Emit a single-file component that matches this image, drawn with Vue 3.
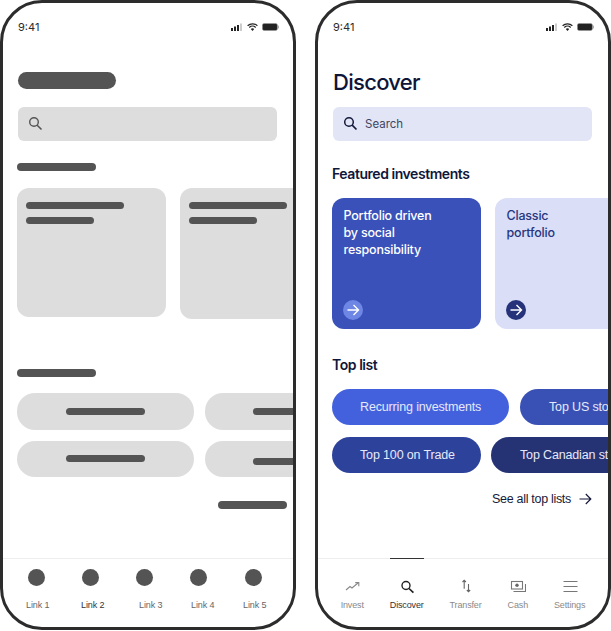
<script setup>
const leftLabels = ['Link 1', 'Link 2', 'Link 3', 'Link 4', 'Link 5']
const rightNav = [
  { label: 'Invest', icon: 'invest' },
  { label: 'Discover', icon: 'discover', active: true },
  { label: 'Transfer', icon: 'transfer' },
  { label: 'Cash', icon: 'cash' },
  { label: 'Settings', icon: 'settings' },
]
</script>

<template>
  <main class="page">
    <!-- Wireframe phone -->
    <section class="phone">
      <header class="status">
        <span class="time">9:41</span>
        <span class="status-icons">
          <svg width="12" height="8" viewBox="0 0 12 8"><rect x="0" y="5" width="2" height="3" fill="#222"/><rect x="3" y="3.5" width="2" height="4.5" fill="#222"/><rect x="6" y="2" width="2" height="6" fill="#222"/><rect x="9" y="0.5" width="2" height="7.5" fill="#ccc"/></svg>
          <svg width="11" height="8" viewBox="0 0 11 8"><path d="M.6 2.8a7 7 0 0 1 9.8 0M2.3 4.5a4.6 4.6 0 0 1 6.4 0" fill="none" stroke="#222" stroke-width="1.2"/><path d="M5.5 8 3.8 6.1a2.4 2.4 0 0 1 3.4 0z" fill="#222"/></svg>
          <svg width="17" height="8" viewBox="0 0 17 8"><rect x=".4" y=".4" width="15" height="7.2" rx="1.8" fill="#222" stroke="#999" stroke-width=".6"/><rect x="15.8" y="2.6" width="1" height="2.8" rx=".5" fill="#999"/></svg>
        </span>
      </header>
      <div class="wf-content">
        <div class="title-row"><div class="bar wf-title"></div></div>
        <div class="search wf-search">
          <svg class="search-icon" width="15" height="15" viewBox="0 0 15 15"><circle cx="6" cy="6" r="4.3" fill="none" stroke="#555" stroke-width="1.4"/><path d="m9.2 9.2 4.3 4.3" stroke="#555" stroke-width="1.6"/></svg>
        </div>
        <div class="bar wf-heading"></div>
        <div class="row wf-cards">
          <div class="wf-card">
            <div class="bar b-long"></div>
            <div class="bar b-short"></div>
          </div>
          <div class="wf-card tall">
            <div class="bar b-long"></div>
            <div class="bar b-short"></div>
          </div>
        </div>
        <div class="bar wf-heading second"></div>
        <div class="row wf-pills">
          <div class="wf-pill"><div class="bar b-pill"></div></div>
          <div class="wf-pill clipped"><div class="bar b-pill"></div></div>
        </div>
        <div class="row wf-pills next">
          <div class="wf-pill"><div class="bar b-pill"></div></div>
          <div class="wf-pill clipped lowered"><div class="bar b-pill"></div></div>
        </div>
        <div class="bar wf-all"></div>
      </div>
      <nav class="wf-nav">
        <div class="dots"><span v-for="n in 5" :key="n" class="dot"></span></div>
        <div class="links">
          <span v-for="(l, i) in leftLabels" :key="l" class="link" :class="[`l${i + 1}`]">{{ l }}</span>
        </div>
      </nav>
    </section>

    <!-- Final phone -->
    <section class="phone">
      <header class="status">
        <span class="time">9:41</span>
        <span class="status-icons">
          <svg width="12" height="8" viewBox="0 0 12 8"><rect x="0" y="5" width="2" height="3" fill="#222"/><rect x="3" y="3.5" width="2" height="4.5" fill="#222"/><rect x="6" y="2" width="2" height="6" fill="#222"/><rect x="9" y="0.5" width="2" height="7.5" fill="#ccc"/></svg>
          <svg width="11" height="8" viewBox="0 0 11 8"><path d="M.6 2.8a7 7 0 0 1 9.8 0M2.3 4.5a4.6 4.6 0 0 1 6.4 0" fill="none" stroke="#222" stroke-width="1.2"/><path d="M5.5 8 3.8 6.1a2.4 2.4 0 0 1 3.4 0z" fill="#222"/></svg>
          <svg width="17" height="8" viewBox="0 0 17 8"><rect x=".4" y=".4" width="15" height="7.2" rx="1.8" fill="#222" stroke="#999" stroke-width=".6"/><rect x="15.8" y="2.6" width="1" height="2.8" rx=".5" fill="#999"/></svg>
        </span>
      </header>
      <div class="content">
        <h1 class="title">Discover</h1>
        <div class="search real">
          <svg class="search-icon" width="15" height="15" viewBox="0 0 15 15"><circle cx="6" cy="6" r="4.3" fill="none" stroke="#15193a" stroke-width="1.5"/><path d="m9.2 9.2 4.3 4.3" stroke="#15193a" stroke-width="1.7"/></svg>
          <span class="search-text">Search</span>
        </div>
        <h2 class="heading">Featured investments</h2>
        <div class="row cards">
          <article class="card blue">
            <p>Portfolio driven<br>by social<br>responsibility</p>
            <span class="go light">
              <svg width="14" height="14" viewBox="0 0 14 14"><path d="M1.5 7h11M7.5 2l5 5-5 5" fill="none" stroke="#fff" stroke-width="1.4"/></svg>
            </span>
          </article>
          <article class="card pale">
            <p>Classic<br>portfolio</p>
            <span class="go dark">
              <svg width="14" height="14" viewBox="0 0 14 14"><path d="M1.5 7h11M7.5 2l5 5-5 5" fill="none" stroke="#fff" stroke-width="1.4"/></svg>
            </span>
          </article>
        </div>
        <h2 class="heading top">Top list</h2>
        <div class="row pills">
          <div class="pill c1">Recurring investments</div>
          <div class="pill c2">Top US stocks</div>
        </div>
        <div class="row pills second">
          <div class="pill c3">Top 100 on Trade</div>
          <div class="pill c4">Top Canadian stocks</div>
        </div>
        <a class="see-all">
          <span>See all top lists</span>
          <svg width="13" height="12" viewBox="0 0 13 12"><path d="M.5 6h11.2M6.8 1l5 5-5 5" fill="none" stroke="#15193a" stroke-width="1.2"/></svg>
        </a>
      </div>
      <nav class="tabs">
        <div v-for="t in rightNav" :key="t.label" class="tab" :class="{ active: t.active }">
          <svg v-if="t.icon === 'invest'" width="16" height="16" viewBox="0 0 16 16" fill="none" stroke="#888" stroke-width="1.1"><path d="M2 12 6 8.5 8 10l6-5"/><path d="M11.2 4.6h3.6v3.6"/></svg>
          <svg v-else-if="t.icon === 'discover'" width="16" height="16" viewBox="0 0 16 16" fill="none" stroke="#222" stroke-width="1.4"><circle cx="7" cy="7.5" r="4"/><path d="m10 10.5 4.4 4.2" stroke-width="1.7"/></svg>
          <svg v-else-if="t.icon === 'transfer'" width="16" height="16" viewBox="0 0 16 16" fill="none" stroke="#666" stroke-width="1.1"><path d="M6.2 10.7V2.3M4.5 4l1.7-1.7L7.9 4"/><path d="M10.5 6v7.7M8.8 12l1.7 1.7 1.7-1.7"/></svg>
          <svg v-else-if="t.icon === 'cash'" width="16" height="16" viewBox="0 0 16 16" fill="none" stroke="#777" stroke-width="1.1"><rect x="1.5" y="3.5" width="11" height="7.5"/><circle cx="7" cy="7.2" r="1.7" fill="#666" stroke="none"/><path d="M3.5 13.5h12V6"/></svg>
          <svg v-else width="16" height="16" viewBox="0 0 16 16" fill="none" stroke="#777" stroke-width="1.2"><path d="M1.5 3.5h14M1.5 8.5h14M1.5 13.5h14"/></svg>
          <span class="tab-label">{{ t.label }}</span>
        </div>
      </nav>
    </section>
  </main>
</template>

<style scoped>
.page {
  display: flex;
  gap: 19px;
  width: 611px;
  height: 631px;
  background: #fff;
  font-family: Inter, "Liberation Sans", sans-serif;
  overflow: hidden;
}
.phone {
  flex: 0 0 296px;
  box-sizing: border-box;
  height: 630px;
  border: 3px solid #2c2c2c;
  border-radius: 42px;
  display: flex;
  flex-direction: column;
  overflow: hidden;
  background: #fff;
}
.status {
  height: 47.5px;
  flex: none;
  box-sizing: border-box;
  padding: 15.5px 14.5px 0 15px;
  display: flex;
  justify-content: space-between;
  align-items: flex-start;
}
.time {
  font-size: 11px;
  line-height: 16px;
  color: #2b2b2b;
}
.status-icons {
  display: flex;
  align-items: center;
  gap: 4px;
  height: 16px;
}
.row {
  display: flex;
  flex-wrap: nowrap;
}
.bar {
  background: #545454;
  border-radius: 4px;
}
.search {
  box-sizing: border-box;
  height: 34px;
  width: 259px;
  margin: 7px 0 0 1px;
  border-radius: 6px;
  display: flex;
  align-items: center;
  padding-left: 10px;
  gap: 7px;
}
.wf-content,
.content {
  padding-left: 14px;
  flex: 1;
  min-height: 0;
}
.title-row {
  height: 36px;
  margin-top: 13px;
  display: flex;
  align-items: flex-start;
}
.wf-title {
  width: 98px;
  height: 17px;
  margin: 8px 0 0 1px;
  border-radius: 8.5px;
}
.wf-search {
  background: #dddddd;
}
.wf-heading {
  width: 79px;
  height: 8px;
  margin-top: 22px;
}
.wf-heading.second {
  margin-top: 50px;
}
.wf-cards {
  margin-top: 17px;
  gap: 14px;
  align-items: flex-start;
}
.wf-card {
  flex: 0 0 149px;
  height: 129px;
  box-sizing: border-box;
  padding: 14px 9px;
  background: #dddddd;
  border-radius: 12px;
}
.wf-card.tall {
  height: 131px;
}
.b-long {
  width: 98px;
  height: 7px;
}
.b-short {
  width: 68px;
  height: 7px;
  margin-top: 8px;
}
.wf-pills {
  margin-top: 16px;
  gap: 11px;
}
.wf-pills.next {
  margin-top: 11px;
}
.wf-pill {
  flex: 0 0 177px;
  height: 37px;
  border-radius: 18px;
  background: #dddddd;
  display: flex;
  align-items: center;
  justify-content: center;
}
.wf-pills.next .wf-pill {
  height: 36px;
}
.wf-pill.clipped {
  justify-content: flex-start;
  padding-left: 48px;
  box-sizing: border-box;
}
.wf-pill.lowered .b-pill {
  margin-top: 6px;
}
.b-pill {
  width: 79px;
  height: 7px;
}
.wf-all {
  width: 69px;
  height: 8px;
  margin: 24px 0 0 201px;
}
.wf-nav {
  flex: none;
  height: 69px;
  border-top: 1px solid #eeeeee;
  box-sizing: border-box;
}
.dots {
  display: flex;
  gap: 37.3px;
  padding: 9.5px 0 0 24.5px;
}
.dot {
  width: 17px;
  height: 17px;
  border-radius: 50%;
  background: #545454;
}
.links {
  display: flex;
  margin-top: 13px;
  padding-left: 23px;
  font-family: "Liberation Sans", sans-serif;
  font-size: 9px;
  line-height: 12px;
  color: #666;
  letter-spacing: -0.1px;
}
.link {
  width: 20px;
  white-space: nowrap;
}
.l2 { margin-left: 35px; color: #333; }
.l3 { margin-left: 38px; }
.l4 { margin-left: 32px; }
.l5 { margin-left: 32px; }

.title {
  margin: 13px 0 0 1px;
  height: 36px;
  font-size: 22px;
  line-height: 36px;
  font-weight: 500;
  letter-spacing: -0.7px;
  color: #0e1538;
}
.real {
  background: #e1e5f5;
  font-size: 11.5px;
  color: #3f4562;
  letter-spacing: 0;
}
.search-text {
  padding-top: 1px;
}
.heading {
  margin: 22px 0 0;
  font-size: 14px;
  line-height: 21px;
  height: 20px;
  font-weight: 600;
  letter-spacing: -0.45px;
  color: #10163a;
}
.heading.top {
  margin-top: 25px;
}
.cards {
  margin-top: 15px;
  gap: 14px;
}
.card {
  flex: 0 0 149px;
  height: 131px;
  box-sizing: border-box;
  border-radius: 12px;
  padding: 9px 11px;
  position: relative;
  display: flex;
  flex-direction: column;
  justify-content: space-between;
}
.card p {
  margin: 0;
  padding-left: 0.5px;
  font-size: 12.5px;
  line-height: 17px;
  font-weight: 500;
  letter-spacing: -0.2px;
}
.blue {
  background: #3951b9;
  color: #fff;
}
.pale {
  background: #dadef7;
  color: #27367f;
}
.go {
  width: 20px;
  height: 20px;
  border-radius: 50%;
  display: flex;
  align-items: center;
  justify-content: center;
}
.light {
  background: #6e86e4;
}
.dark {
  background: #26337a;
}
.pills {
  margin-top: 15px;
  gap: 11px;
}
.pills.second {
  margin-top: 12px;
  gap: 10px;
}
.pill {
  flex: none;
  height: 36px;
  line-height: 37px;
  border-radius: 18px;
  padding: 0 28px;
  font-family: "Liberation Sans", sans-serif;
  font-size: 12.5px;
  letter-spacing: -0.15px;
  color: #e6e9fa;
  white-space: nowrap;
}
.c1 { background: #4361dd; width: 121px; }
.c2 { background: #3951b5; padding-left: 29px; }
.c3 { background: #2d429a; width: 93px; }
.c4 { background: #253274; padding-left: 29px; }
.see-all {
  display: flex;
  justify-content: flex-end;
  align-items: center;
  gap: 8px;
  height: 20px;
  margin-top: 16px;
  width: 260px;
  font-family: "Liberation Sans", sans-serif;
  font-size: 12.5px;
  letter-spacing: -0.3px;
  color: #15193a;
}
.tabs {
  flex: none;
  height: 69px;
  box-sizing: border-box;
  border-top: 1px solid #eeeeee;
  display: flex;
  justify-content: center;
  gap: 26px;
}
.tab {
  position: relative;
  display: flex;
  flex-direction: column;
  align-items: center;
  padding-top: 19px;
  gap: 5px;
}
.tab.active::before {
  content: "";
  position: absolute;
  left: 0;
  right: 0;
  top: -1px;
  height: 1px;
  background: #333;
}
.tab-label {
  font-family: "Liberation Sans", sans-serif;
  font-size: 9px;
  line-height: 12px;
  letter-spacing: -0.15px;
  color: #8a8a8a;
}
.active .tab-label {
  color: #333;
}
</style>
